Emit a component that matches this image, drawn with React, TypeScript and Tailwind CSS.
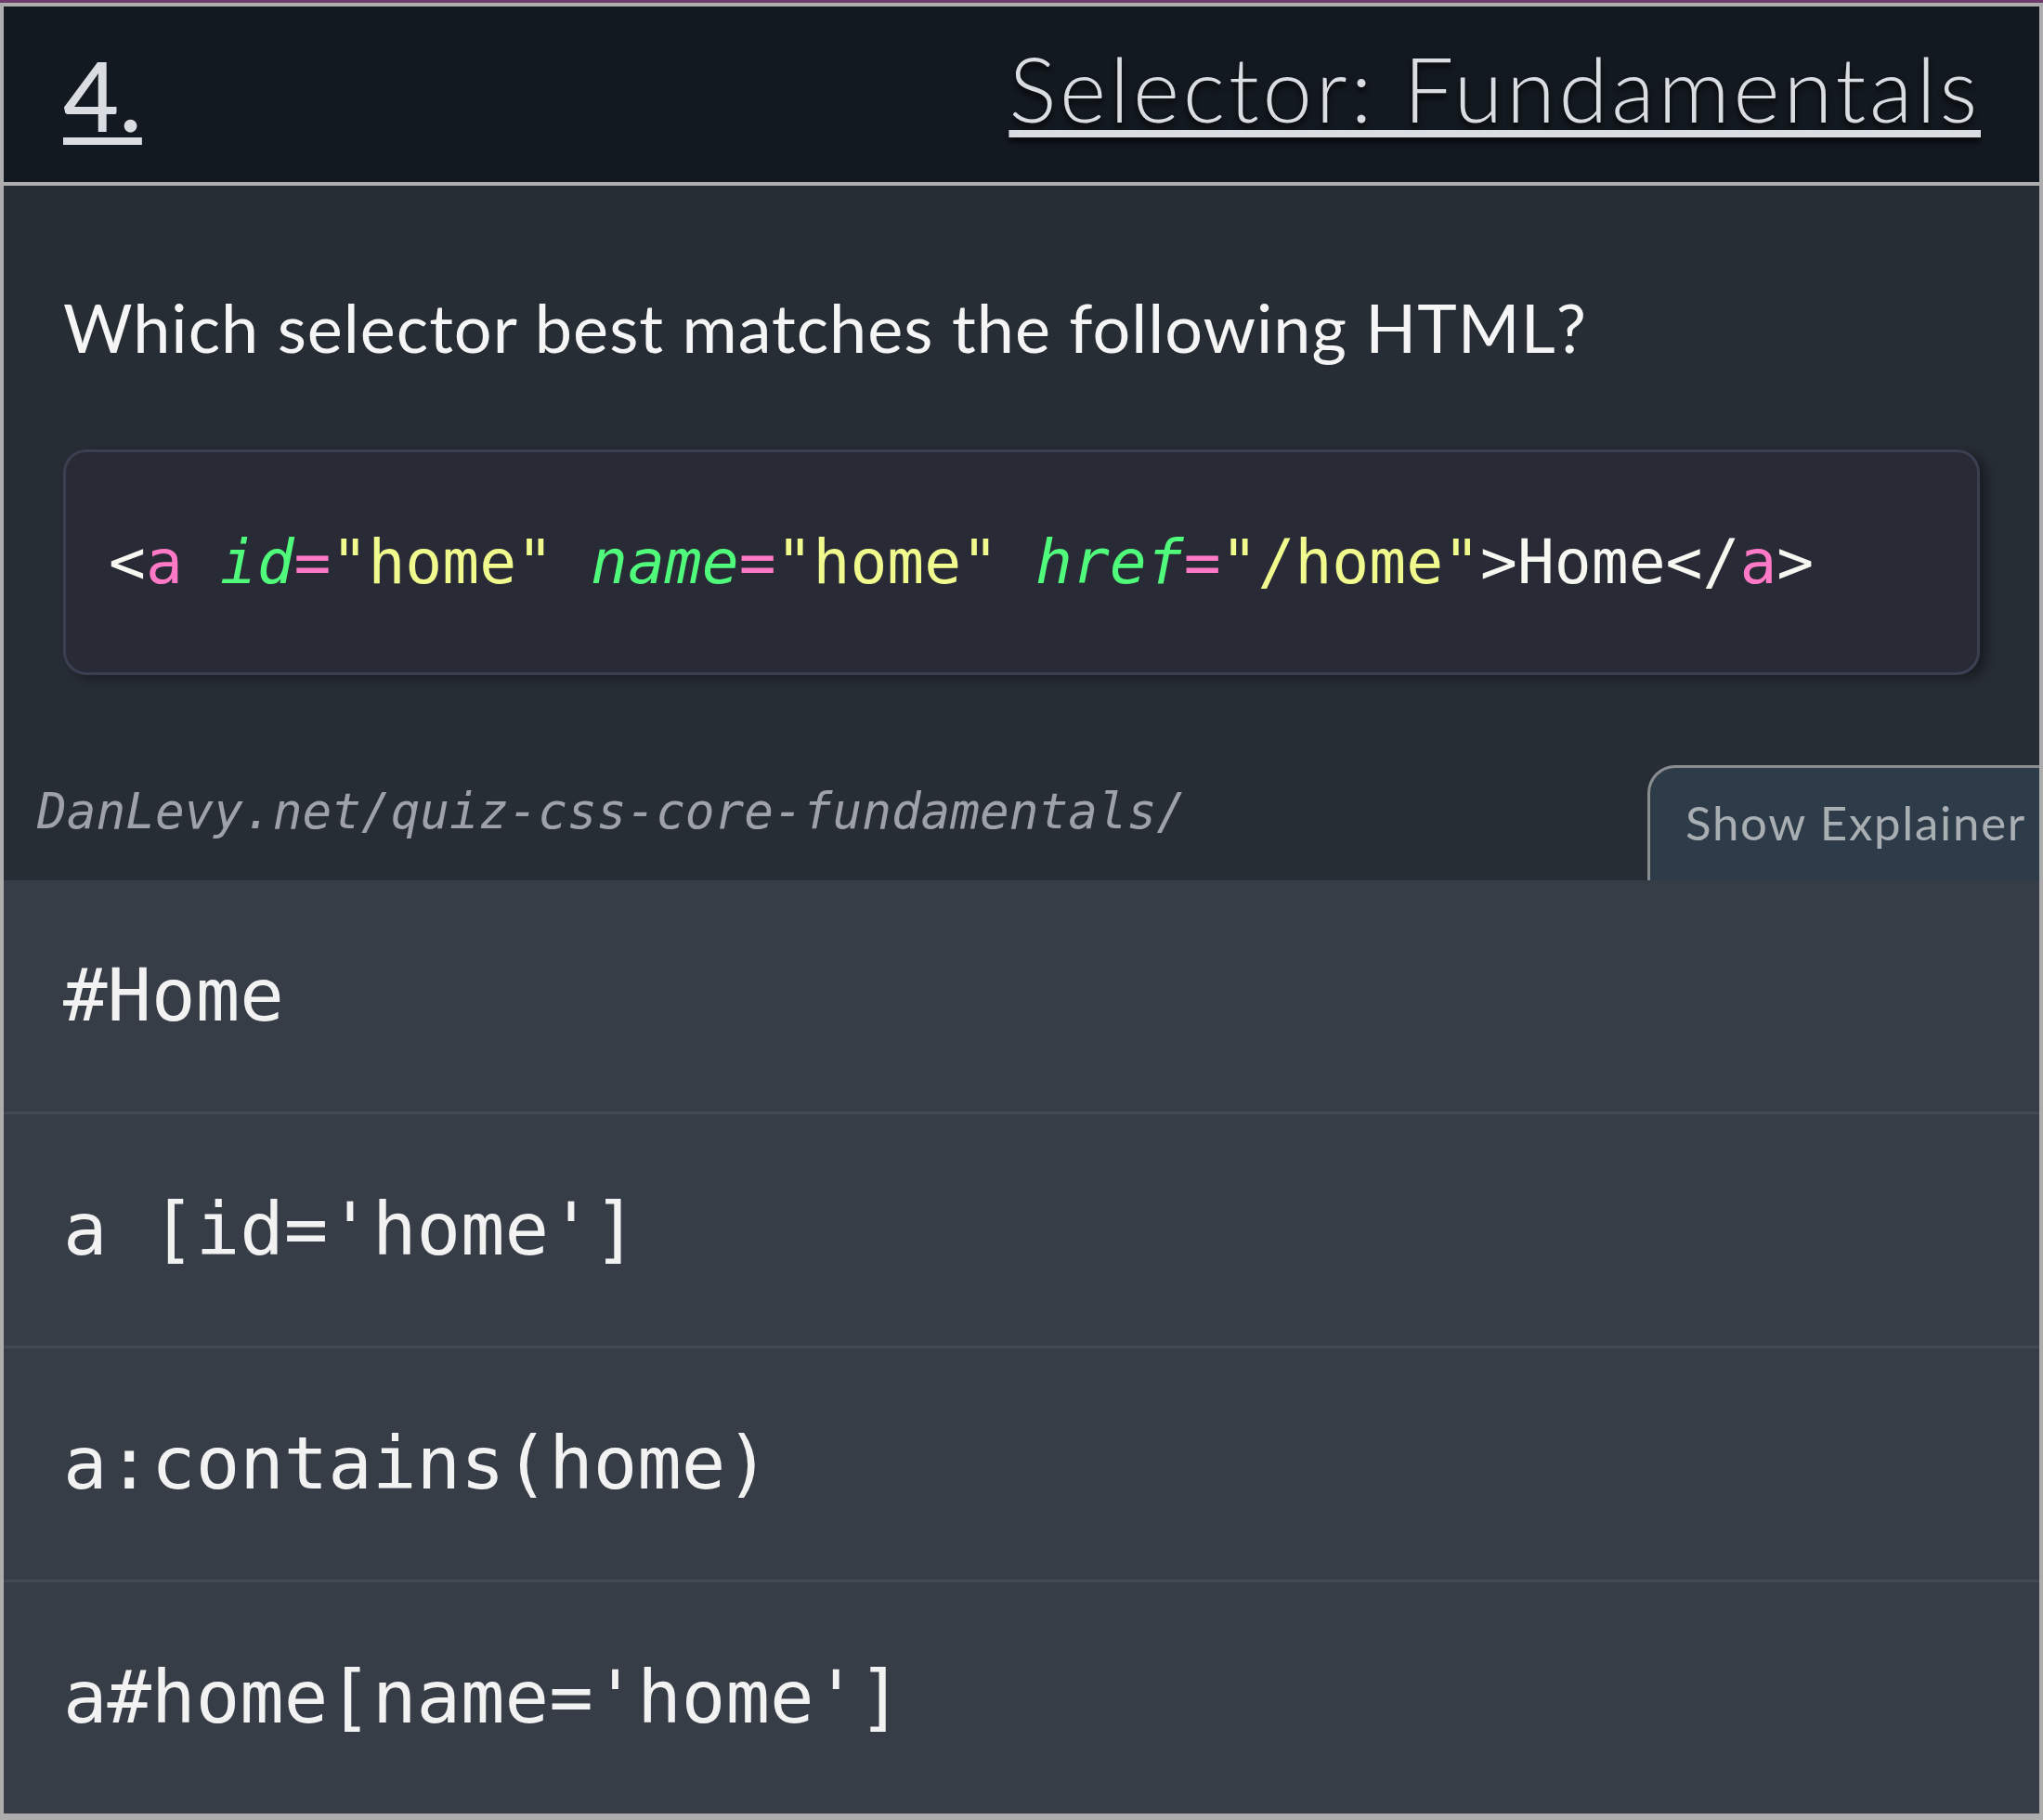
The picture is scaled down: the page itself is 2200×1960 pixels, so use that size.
import React from "react";

const sans = "[font-family:'Lato','Open_Sans',sans-serif]";

function Attr({ name, value }: { name: string; value: string }) {
  return (
    <>
      {" "}
      <span className="italic text-[#50fa7b]">{name}</span>
      <span className="text-[#ff79c6]">=</span>
      <span className="text-[#f1fa8c]">"{value}"</span>
    </>
  );
}

const options = ["#Home", "a [id='home']", "a:contains(home)", "a#home[name='home']"];

export default function App() {
  return (
    <div className="w-[2200px] h-[1960px] bg-[#6d3a6b] pt-[3px]">
      <div className="h-[1957px] border-x-[4px] border-t-[4px] border-b-[7px] border-[#adadad] flex flex-col">
        {/* Header */}
        <div className={`h-[189px] shrink-0 bg-[#131920] flex items-start justify-between pl-[64px] pr-[63px] ${sans}`}>
          <div className="mt-[43px] text-[104px] leading-none font-medium text-[#d9dce0] underline decoration-[8px] underline-offset-[6px]">
            4.
          </div>
          <div className="mt-[40px] text-[96px] leading-none font-light tracking-[3.8px] text-[#d9dce0] underline decoration-[8px] underline-offset-[8px] [text-shadow:0_5px_6px_rgba(0,0,0,0.75)]">
            Selector: Fundamentals
          </div>
        </div>
        <div className="h-[4px] shrink-0 bg-[#adadad]" />
        {/* Body */}
        <div className="h-[748px] shrink-0 bg-[#272d35] flex flex-col pt-[116px]">
          <div className={`px-[64px] text-[72px] leading-none tracking-[1px] text-[#f5f5f5] ${sans}`}>
            Which selector best matches the following HTML?
          </div>
          <div className="mx-[64px] mt-[96px] h-[243px] rounded-[25px] border-[3px] border-[#3c3e52] bg-[#282a36] pl-[46px] flex items-center shadow-[8px_4px_12px_rgba(0,0,0,0.35)]">
            <div className="[font-family:'DejaVu_Sans_Mono',monospace] text-[66.3px] leading-none text-[#f8f8f2] whitespace-pre">
              {"<"}
              <span className="text-[#ff79c6]">a</span>
              <Attr name="id" value="home" />
              <Attr name="name" value="home" />
              <Attr name="href" value="/home" />
              {">Home</"}
              <span className="text-[#ff79c6]">a</span>
              {">"}
            </div>
          </div>
          <div className="mt-[97px] h-[124px] flex items-start justify-between">
            <div className="ml-[36px] mt-[24px] [font-family:'DejaVu_Sans_Mono',monospace] italic text-[52.7px] leading-none text-[#9ea2a8]">
              DanLevy.net/quiz-css-core-fundamentals/
            </div>
            <div className={`w-[422px] h-[124px] border-t-[3px] border-l-[3px] border-[#8a8d90] rounded-tl-[30px] bg-[#2e3c49] pl-[38px] pt-[33px] text-[51px] leading-none tracking-[1.7px] text-[#a9aeb3] ${sans}`}>
              Show Explainer
            </div>
          </div>
        </div>
        {/* Options */}
        <div className="flex-1 bg-[#373d46] flex flex-col">
          {options.map((o, i) => (
            <div
              key={o}
              className={`${i === 0 ? "h-[249px]" : "h-[252px] border-t-[3px] border-[#424951]"} flex items-center px-[64px] [font-family:'DejaVu_Sans_Mono',monospace] text-[79px] leading-none text-[#f2f2f2] whitespace-pre`}
            >
              {o}
            </div>
          ))}
        </div>
      </div>
    </div>
  );
}
